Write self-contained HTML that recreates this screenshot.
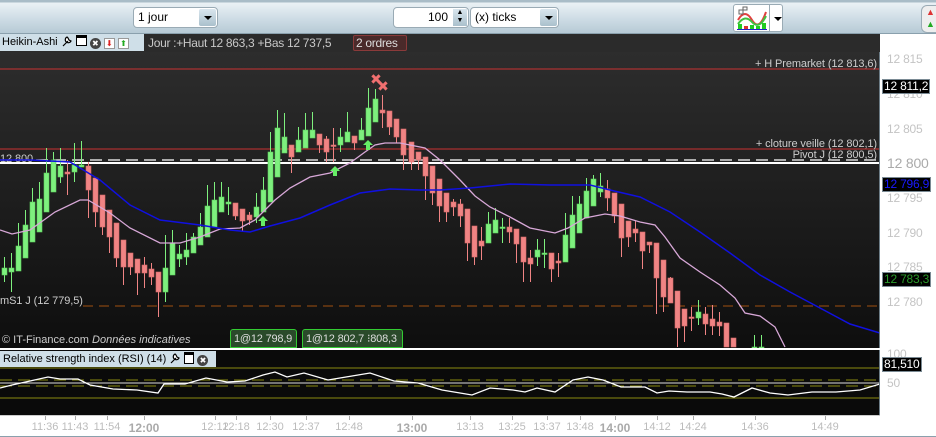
<!DOCTYPE html>
<html><head><meta charset="utf-8"><style>
*{margin:0;padding:0;box-sizing:border-box}
body{width:936px;height:437px;overflow:hidden;background:#fff;font-family:"Liberation Sans",Arial,sans-serif;position:relative}
.top{position:absolute;left:0;top:0;width:936px;height:34px;background:linear-gradient(#a9bcc7 0,#a9bcc7 2px,#eaf1f5 3px,#cfdde6 18px,#b5c9d4 34px);border-bottom:1px solid #8aa0ad}
.sel{position:absolute;background:#fff;border:1px solid #9aabb5;border-radius:4px;font-size:12px;color:#000;line-height:19px;padding-left:4px}
.arr{position:absolute;right:1px;top:1px;width:17px;height:17px;background:linear-gradient(#d9e6ee,#aac0cc);border-radius:2px}
.arr:after{content:"";position:absolute;left:5px;top:7px;border-left:4px solid transparent;border-right:4px solid transparent;border-top:4px solid #000}
.hdr{position:absolute;left:0;top:34px;width:880px;height:18px;background:#2b2b2b}
.tab{position:absolute;left:0;top:34px;height:17px;width:144px;background:#cfdfe8;font-size:11px;line-height:17px;padding-left:2px;color:#000;white-space:nowrap}
.ax{position:absolute;font-size:12px;color:#c4c4c4;letter-spacing:-0.2px}
.t{position:absolute;top:421px;font-size:11px;color:#bcbcbc;transform:translateX(-50%)}
.t.b{font-weight:bold;font-size:12px;color:#aaa}
.box{position:absolute;background:#000;border:1px solid #7a8a94;font-size:12px;line-height:13px;padding:0 1px;white-space:nowrap;letter-spacing:-0.2px}
.ic{display:inline-block;vertical-align:-2px}
.tr{position:absolute;top:329px;height:19px;border:1px solid #3c3;border-radius:3px 3px 0 0;background:#2a4a2a;font-size:11px;color:#ddd;padding-left:3px;line-height:18px;white-space:nowrap;overflow:hidden;letter-spacing:-0.2px}
</style></head><body>
<div class="top"></div>
<div class="sel" style="left:133px;top:7px;width:85px;height:21px">1 jour<div class="arr"></div></div>
<div class="sel" style="left:393px;top:7px;width:76px;height:21px;text-align:right;padding-right:20px">100<div style="position:absolute;right:1px;top:1px;width:14px;height:17px;background:linear-gradient(#d9e6ee,#aac0cc);font-size:7px;line-height:8px;text-align:center">▲<br>▼</div></div>
<div class="sel" style="left:470px;top:7px;width:89px;height:21px">(x) ticks<div class="arr"></div></div>
<div style="position:absolute;left:733px;top:4px;width:50px;height:28px;border:1px solid #9aabb5;border-radius:3px;background:#fff">
<svg width="34" height="26" style="position:absolute;left:1px;top:1px"><path d="M3 14 Q10 2 17 14 T31 6" stroke="#e04040" fill="none" stroke-width="2"/><path d="M3 18 Q10 8 17 16 T31 10" stroke="#40c040" fill="none" stroke-width="2"/><rect x="3" y="18" width="4" height="5" fill="#2c2"/><rect x="9" y="20" width="4" height="3" fill="#d33"/><rect x="15" y="19" width="4" height="4" fill="#2c2"/><rect x="21" y="20" width="4" height="3" fill="#2c2"/><rect x="27" y="17" width="4" height="6" fill="#2c2"/><rect x="2" y="23" width="30" height="1" fill="#22c"/><path d="M4 4h4v-3h4v3h-4v4h-4z" fill="#fff" stroke="#666"/></svg>
<div style="position:absolute;left:35px;top:0;width:1px;height:26px;background:#9aabb5"></div>
<div style="position:absolute;left:40px;top:12px;border-left:4px solid transparent;border-right:4px solid transparent;border-top:4px solid #000"></div></div>
<div style="position:absolute;left:921px;top:5px;width:16px;height:28px;border:1px solid #9aabb5;border-radius:6px 0 0 6px;background:#eee;font-size:9px;color:#d33;padding-left:4px;line-height:12px">▲<br><span style="color:#2a2">▲</span></div>
<div class="hdr"></div>
<div class="tab">Heikin-Ashi <svg class="ic" width="12" height="12"><path d="M2 11 L7 6 M6 2 a3 3 0 1 0 4 4 l-2 -1 l-1 -2z" stroke="#000" fill="#fff" stroke-width="1.2"/></svg> <span style="display:inline-block;width:11px;height:11px;border:1px solid #000;border-top-width:3px;background:#fff;vertical-align:-1px"></span> <span style="display:inline-block;width:11px;height:11px;border-radius:50%;background:#444;color:#fff;font-size:8px;line-height:11px;text-align:center;vertical-align:-1px">✖</span> <span style="display:inline-block;width:11px;height:11px;background:#fff;border:1px solid #999;color:#d22;font-size:8px;line-height:10px;text-align:center;vertical-align:-1px">⬇</span> <span style="display:inline-block;width:11px;height:11px;background:#fff;border:1px solid #999;color:#2a2;font-size:8px;line-height:10px;text-align:center;vertical-align:-1px">⬆</span></div>
<div style="position:absolute;left:148px;top:36px;font-size:12px;color:#c8c8c8;letter-spacing:-0.3px">Jour :+Haut 12 863,3 +Bas 12 737,5</div>
<div style="position:absolute;left:353px;top:35px;width:54px;height:16px;border:1px solid #8a3a3a;border-radius:2px;background:#4a2a2a;font-size:12px;color:#ddd;line-height:14px;padding-left:2px;white-space:nowrap;overflow:hidden;letter-spacing:-0.3px">2 ordres</div>
<svg id="ch" width="880" height="296" style="position:absolute;left:0;top:52px">
<defs><linearGradient id="g" x1="0" y1="0" x2="0" y2="1"><stop offset="0" stop-color="#2d2d2d"/><stop offset="1" stop-color="#0e0e0e"/></linearGradient></defs>
<rect width="880" height="296" fill="url(#g)"/>
</svg>
<div style="position:absolute;left:879px;top:52px;width:1px;height:296px;background:#6c7c86"></div>
<div style="position:absolute;left:0;top:348px;width:880px;height:3px;background:#fff"></div>
<svg width="880" height="65" style="position:absolute;left:0;top:350px">
<rect width="880" height="65" fill="#0a0a0a"/>
<line x1="0" x2="880" y1="18" y2="18" stroke="#8a8a10"/>
<line x1="0" x2="880" y1="48" y2="48" stroke="#8a8a10"/>
<line x1="0" x2="880" y1="30" y2="30" stroke="#8a8a10" stroke-dasharray="12,6"/>
<line x1="0" x2="880" y1="36" y2="36" stroke="#8a8a10" stroke-dasharray="12,6"/>
<line x1="0" x2="880" y1="33" y2="33" stroke="#ddd"/>
<polyline fill="none" stroke="#fff" stroke-width="1.3" points="0,38 12,35 30,31 48,27 60,29 78,29 90,35 113,39 137,40 158,43 164,34 185,34 206,28 227,32 245,31 263,25 275,22 287,27 304,23 328,30 346,27 370,23 394,31 418,33 442,40 472,45 490,38 513,40 525,42 537,38 555,42 573,30 588,27 603,30 621,37 645,37 657,43 669,41 687,42 710,42 722,44 734,47 752,38 770,43 788,45 812,42 836,42 860,40 880,34"/>
</svg>
<div style="position:absolute;left:879px;top:350px;width:1px;height:65px;background:#6c7c86"></div>
<div style="position:absolute;left:0;top:351px;width:216px;height:16px;background:#cfdfe8;font-size:11px;line-height:16px;padding-left:3px;white-space:nowrap">Relative strength index (RSI) (14) <svg class="ic" width="12" height="12"><path d="M2 11 L7 6 M6 2 a3 3 0 1 0 4 4 l-2 -1 l-1 -2z" stroke="#000" fill="#fff" stroke-width="1.2"/></svg> <span style="display:inline-block;width:10px;height:12px;border:1px solid #000;border-top-width:3px;background:#fff;vertical-align:-2px"></span> <span style="display:inline-block;width:11px;height:11px;border-radius:50%;background:#444;color:#fff;font-size:8px;line-height:11px;text-align:center;vertical-align:-1px">✖</span></div>
<div style="position:absolute;left:0;top:415px;width:880px;height:1px;background:#ccc"></div>
<div style="position:absolute;left:0;top:436px;width:936px;height:1px;background:#8aa0ad"></div>
<div class="ax" style="left:887px;top:52px">12 815</div>
<div class="ax" style="left:887px;top:87px">12 810</div>
<div class="ax" style="left:887px;top:122px">12 805</div>
<div class="ax" style="left:887px;top:155px;font-size:14px;color:#aaa">12 800</div>
<div class="ax" style="left:887px;top:191px">12 795</div>
<div class="ax" style="left:887px;top:226px">12 790</div>
<div class="ax" style="left:887px;top:260px">12 785</div>
<div class="ax" style="left:887px;top:295px">12 780</div>
<div class="ax" style="left:887px;top:347px">100</div>
<div class="ax" style="left:887px;top:376px">50</div>
<div class="box" style="left:882px;top:79px;color:#fff">12 811,2</div>
<div class="box" style="left:882px;top:177px;color:#1a1aff">12 796,9</div>
<div class="box" style="left:882px;top:272px;color:#2a9a2a">12 783,3</div>
<div class="box" style="left:882px;top:357px;color:#fff">81,510</div>
<div id="tl"></div>
<div style="position:absolute;left:2px;top:334px;font-size:11px;color:#ccc;white-space:nowrap">© IT-Finance.com <i>Données indicatives</i></div>
<div class="tr" style="left:230px;width:67px">1@12 798,9</div>
<div class="tr" style="left:302px;width:101px">1@12 802,7 ⁝808,3</div>
<script>
var s=document.getElementById('ch'),o=52,h='';
function L(a){h+=a}
L('<line x1="0" x2="880" y1="17" y2="17" stroke="#c83232"/>');
L('<line x1="0" x2="880" y1="97" y2="97" stroke="#c83232"/>');
L('<line x1="0" x2="880" y1="108" y2="108" stroke="#fff" stroke-dasharray="12,6" stroke-width="1.2"/>');
L('<line x1="0" x2="880" y1="111" y2="111" stroke="#fff" stroke-width="2"/>');
L('<line x1="83" x2="880" y1="254" y2="254" stroke="#a05010" stroke-dasharray="10,6"/>');
var F=' fill="#ccc" font-size="11" letter-spacing="-0.1" font-family="Liberation Sans"';
L('<text x="877" y="15" text-anchor="end"'+F+'>+ H Premarket (12 813,6)</text>');
L('<text x="877" y="95" text-anchor="end"'+F+'>+ cloture veille  (12 802,1)</text>');
L('<text x="877" y="106" text-anchor="end"'+F+'>Pivot J (12 800,5)</text>');
L('<text x="0" y="110"'+F+'>12 800</text>');
L('<text x="0" y="252"'+F+'>mS1 J (12 779,5)</text>');
var c=[[4,268,275,257,282,1],[11,268,272,253,292,1],[18,246,271,223,271,1],[25,225,258,210,258,1],[32,202,242,188,242,1],[39,199,232,182,232,1],[46,173,212,148,212,1],[53,160,192,152,192,1],[60,166,177,148,183,1],[67,172,174,160,195,0],[74,165,172,143,182,1],[81,165,167,141,167,1],[88,166,190,162,218,0],[95,178,212,178,227,0],[102,195,227,195,235,0],[109,210,237,210,253,0],[116,223,258,223,267,0],[123,240,267,240,285,0],[130,253,267,253,275,0],[137,259,273,259,295,0],[144,265,273,257,288,0],[151,269,277,263,285,0],[158,272,292,272,317,0],[165,268,292,235,302,1],[172,243,275,230,275,1],[179,254,259,245,267,1],[186,250,257,233,265,1],[193,237,253,233,253,1],[200,227,245,213,245,1],[207,206,237,185,237,1],[214,200,227,182,227,1],[221,197,212,182,212,1],[228,202,204,187,215,1],[235,203,216,203,220,0],[242,209,221,209,232,0],[249,215,220,212,225,0],[256,207,217,193,223,1],[263,190,212,177,212,1],[270,152,202,132,202,1],[277,128,177,110,177,1],[284,137,153,113,153,1],[291,145,157,145,173,0],[298,140,152,127,152,1],[305,130,148,113,148,1],[312,130,138,112,138,1],[319,134,145,134,153,0],[326,139,152,136,162,0],[333,145,146,128,162,0],[340,137,145,128,152,1],[347,132,142,112,142,1],[354,136,143,136,150,0],[361,130,140,118,140,1],[368,108,136,88,136,1],[375,99,122,89,122,1],[382,110,113,95,128,0],[389,111,127,111,135,0],[396,119,137,119,143,0],[403,129,155,129,170,0],[411,142,162,142,170,0],[418,152,160,152,170,0],[425,157,176,157,200,0],[432,166,193,166,205,0],[439,179,206,179,222,0],[446,193,212,193,222,0],[453,202,207,199,216,0],[460,204,216,199,227,0],[467,209,243,209,261,0],[474,226,257,226,265,0],[481,241,246,227,260,0],[488,224,243,212,243,1],[495,220,233,208,233,1],[502,227,228,218,243,1],[509,227,232,218,243,0],[516,229,244,229,263,0],[523,237,262,237,282,0],[530,258,264,250,282,0],[537,250,257,239,266,1],[544,253,254,239,268,1],[551,253,269,253,282,0],[558,261,263,253,277,0],[565,235,262,213,262,1],[572,215,248,196,248,1],[579,204,233,196,233,1],[586,191,218,178,218,1],[593,179,206,175,206,1],[600,186,192,173,197,1],[607,189,198,180,211,0],[614,193,216,193,223,0],[621,204,238,204,257,0],[628,221,237,221,247,0],[635,229,233,221,242,0],[642,232,251,232,269,0],[649,242,245,242,253,0],[656,243,278,243,314,0],[663,260,297,260,312,0],[670,278,303,277,303,0],[677,291,328,291,347,0],[684,309,326,309,342,0],[691,317,318,307,331,0],[698,312,318,300,325,1],[705,314,324,307,335,0],[712,319,326,305,335,0],[719,322,326,312,336,0],[726,323,347,323,347,0],[733,338,347,338,347,0],[754,347,347,335,347,1],[761,347,347,335,347,1]];
c.forEach(function(k){var x=k[0],a=k[1]-o,b=k[2]-o,hi=k[3]-o,lo=k[4]-o,g=k[5];var col=g?'#7ef07e':'#f08484',st=g?'#5cd05c':'#d86a6a';
L('<line x1="'+(x+.5)+'" x2="'+(x+.5)+'" y1="'+hi+'" y2="'+lo+'" stroke="'+col+'"/>');
L('<rect x="'+(x-2)+'" y="'+a+'" width="5" height="'+Math.max(1.5,b-a)+'" fill="'+col+'" stroke="'+st+'" stroke-width=".6"/>');});
function P(p,col,w){L('<polyline fill="none" stroke="'+col+'" stroke-width="'+w+'" points="'+p.map(function(q){return q[0]+','+(q[1]-o)}).join(' ')+'"/>')}
P([[0,230],[12,234],[30,230],[55,212],[80,200],[88,200],[110,213],[130,228],[160,243],[180,243],[200,237],[220,229],[240,228],[255,220],[275,200],[290,188],[310,177],[330,173],[350,163],[365,152],[375,145],[385,143],[400,143],[425,148],[440,160],[460,180],[475,196],[490,207],[510,217],[530,228],[555,233],[568,228],[585,218],[605,214],[620,216],[640,222],[655,225],[665,237],[680,258],[700,272],[720,285],[735,298],[745,313],[760,316],[775,327],[785,347]],'#d8a8d8',1.3);
P([[0,160],[30,160],[70,162],[100,180],[130,205],[160,220],[200,225],[230,230],[250,232],[270,226],[300,218],[330,205],[360,193],[390,189],[420,190],[440,190],[470,188],[510,184],[550,185],[590,185],[610,190],[640,197],[670,212],[700,232],[730,253],[760,275],[790,292],[820,308],[850,324],[880,333]],'#1010e0',1.5);
[[263,223],[335,173],[368,147]].forEach(function(q){var x=q[0],y=q[1]-o;L('<path d="M'+x+' '+(y-7)+' l5 5 h-3 v5 h-4 v-5 h-3z" fill="#6e6" />')});
[[376,79],[383,86]].forEach(function(q){L('<text x="'+q[0]+'" y="'+(q[1]-o+5)+'" text-anchor="middle" fill="#f07070" font-size="14" font-weight="bold" font-family="DejaVu Sans">✖</text>')});
s.innerHTML+=h;
var t=[['11:36',45],['11:43',75],['11:54',107],['12:00',144,1],['12:12',215],['12:18',236],['12:30',270],['12:37',306],['12:48',349],['13:00',412,1],['13:13',470],['13:25',512],['13:37',547],['13:48',580],['14:00',615,1],['14:12',657],['14:24',693],['14:36',755],['14:49',825]],th='';
t.forEach(function(k){th+='<div class="t'+(k[2]?' b':'')+'" style="left:'+k[1]+'px">'+k[0]+'</div><div style="position:absolute;left:'+k[1]+'px;top:416px;width:1px;height:4px;background:#aaa"></div>'});
document.getElementById('tl').innerHTML=th;
</script>
</body></html>
